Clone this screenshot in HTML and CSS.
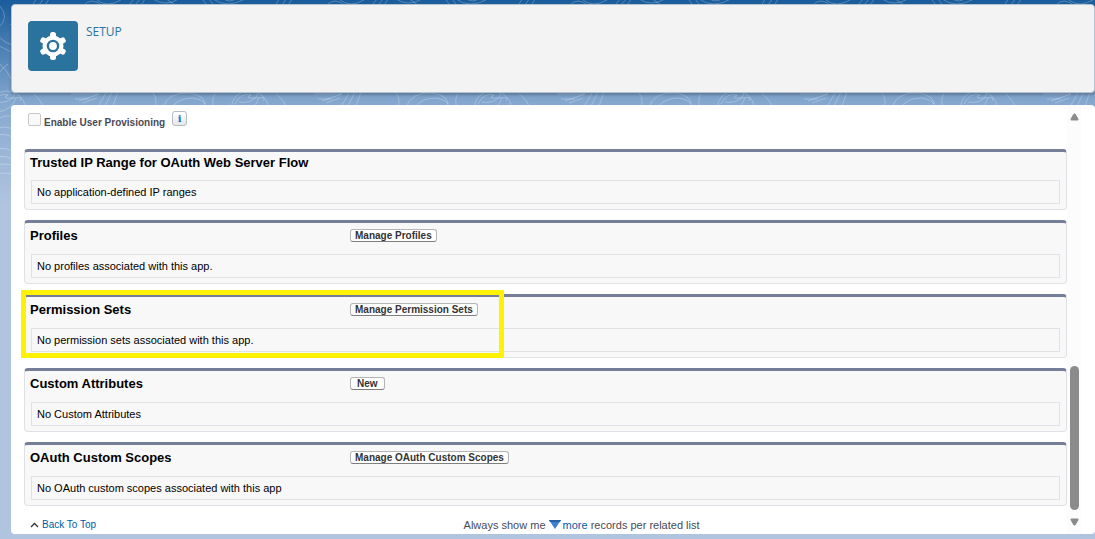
FILE: index.html
```html
<!DOCTYPE html>
<html lang="en">
<head>
<meta charset="utf-8">
<title>Setup</title>
<link rel="stylesheet" href="styles.css">
</head>
<body>
<svg class="contours" aria-hidden="true">
  <defs>
    <pattern id="topo" width="243" height="210" patternUnits="userSpaceOnUse" x="33" y="0">
      <g fill="none" stroke="#fff" stroke-opacity=".25">
        <path d="M0 4L4-2M6 5l5-7M12 5l5-7M50 6q8-10 20 0M64 0q10 8 24 0M96 5l6-7M102 5l6-7M108 5l5-7M120-1q12 8 26 0M132-2l10 7M180-1q14 10 32 0M190-2q6 6 14 0M170 0l4 5M176-1l4 5"/>
        <path d="M-4 91q10 6 14 15M38 94h28l-20 7M42 99h14M50 103l14-5M66 105l7-12M72 106l7-14M80 106l5-14M116 90q10 6 6 18M130 108q4-16 26-15q18 2 16 15M140 106q6-8 20-8q10 2 12 6M198 108q2-16 18-17q16 0 20 17M202 104q6-12 16-9q-8 4 6 3q10-2 6 3M182 94q-4 5-1 14"/>
        <path d="M210 6q10 12-2 22M210 38q14 12 22 4t-12-18M209 46q10 6 22 8M218 64q-12 8-12 22M210 64q18 18 14 32q-6 8-18 6M208 112q14-2 18-14M206 122q8-10 18-4M206 130q8-6 18 0M206 136q8-4 18 2M206 150q8-4 18 2M206 158q8-4 18 2M206 166q8-4 18 0M206 174q8-2 18 0"/>
      </g>
    </pattern>
  </defs>
  <rect width="100%" height="100%" fill="url(#topo)"/>
</svg>
<div class="page">
  <header class="setup-header">
    <span class="setup-icon">
      <svg viewBox="0 0 30 30" width="30" height="30" aria-hidden="true">
        <g fill="#fff">
          <circle cx="15" cy="15" r="10.500"/>
          <rect x="12" y="1" width="6" height="28" rx="2.500"/>
          <rect x="12" y="1" width="6" height="28" rx="2.500" transform="rotate(60 15 15)"/>
          <rect x="12" y="1" width="6" height="28" rx="2.500" transform="rotate(120 15 15)"/>
        </g>
        <circle cx="15" cy="15" r="5.100" fill="#fff" stroke="#2a739e" stroke-width="2.400"/>
      </svg>
    </span>
    <span class="setup-label">SETUP</span>
  </header>
  <main class="panel">
    <div class="content">
      <div class="provisioning">
        <input type="checkbox" id="provision" class="tick">
        <label for="provision">Enable User Provisioning</label>
        <button type="button" class="info" aria-label="Info">i</button>
      </div>
      <section class="block compact">
        <div class="block-head"><h2>Trusted IP Range for OAuth Web Server Flow</h2></div>
        <p class="empty">No application-defined IP ranges</p>
      </section>
      <section class="block">
        <div class="block-head"><h2>Profiles</h2><button type="button" class="btn">Manage Profiles</button></div>
        <p class="empty">No profiles associated with this app.</p>
      </section>
      <section class="block">
        <div class="block-head"><h2>Permission Sets</h2><button type="button" class="btn">Manage Permission Sets</button></div>
        <p class="empty">No permission sets associated with this app.</p>
        <div class="highlight"></div>
      </section>
      <section class="block">
        <div class="block-head"><h2>Custom Attributes</h2><button type="button" class="btn new">New</button></div>
        <p class="empty">No Custom Attributes</p>
      </section>
      <section class="block">
        <div class="block-head"><h2>OAuth Custom Scopes</h2><button type="button" class="btn">Manage OAuth Custom Scopes</button></div>
        <p class="empty">No OAuth custom scopes associated with this app</p>
      </section>
      <footer class="foot">
        <a href="#" class="top-link"><svg width="9" height="6" viewBox="0 0 9 6" aria-hidden="true"><path d="M1 5l3.500-3.500L8 5" fill="none" stroke="#333" stroke-width="1.300"/></svg>Back To Top</a>
        <span class="show-more">Always show me <a href="#"><svg width="12" height="9" viewBox="0 0 12 9" aria-hidden="true"><path d="M0 0h12L6 9z" fill="#3a7fd0"/><path d="M0 0h12l-1 2H1z" fill="#2762a8"/></svg><span class="more">more</span></a> records per related list</span>
      </footer>
    </div>
    <div class="scrollbar" aria-hidden="true">
      <svg width="9" height="8" viewBox="0 0 9 8"><path d="M4 1h1l3 5v1H1V6z" fill="#8b8b8b" stroke="#8b8b8b" stroke-linejoin="round"/></svg>
      <div class="thumb"></div>
      <svg width="9" height="8" viewBox="0 0 9 8"><path d="M4 7h1l3-5V1H1v1z" fill="#8b8b8b" stroke="#8b8b8b" stroke-linejoin="round"/></svg>
    </div>
  </main>
</div>
</body>
</html>
```
FILE: styles.css
```css
* { box-sizing: border-box; }

body {
  margin: 0;
  min-height: 100vh;
  background: linear-gradient(#195c9c 0, #87a9d0 105px, #b0c4df 205px, #b0c4df 100%);
  font-family: "Liberation Sans", Arial, sans-serif;
  font-size: 11px;
  color: #000;
}

h2, p { margin: 0; }
a { color: #015ba7; text-decoration: none; }

.contours {
  position: absolute;
  top: 0;
  left: 0;
  width: 100%;
  height: 205px;
}

.page {
  position: relative;
  display: flex;
  flex-direction: column;
  gap: 12px;
  min-height: 100vh;
  padding: 4px 0 5px 11px;
}

.setup-header {
  display: flex;
  gap: 8px;
  min-height: 89px;
  padding: 16px;
  background: #f3f3f3;
  border: 1px solid #b5c3d2;
  border-radius: 4px;
  box-shadow: 0 2px 3px rgba(0, 0, 0, .25);
}

.setup-icon {
  display: grid;
  place-items: center;
  width: 50px;
  height: 50px;
  background: #2a739e;
  border-radius: 4px;
}

.setup-label {
  font-family: "Open Sans", "Noto Sans", sans-serif;
  font-size: 12px;
  line-height: 22px;
  color: #2a739e;
}

.panel {
  display: flex;
  flex: 1;
  padding-right: 14px;
  background: #fff;
  border-radius: 4px;
}

.content {
  flex: 1;
  display: flex;
  flex-direction: column;
  gap: 10px;
  padding: 6px 0 0 13px;
}

.provisioning {
  display: flex;
  align-items: flex-start;
  gap: 3px;
  height: 28px;
  padding-left: 4px;
  font-size: 10px;
  font-weight: bold;
  color: #4a4a56;
}

.provisioning label { line-height: 13px; padding: 5px 4px 0 0; }

.tick {
  appearance: none;
  width: 13px;
  height: 13px;
  margin: 2px 0 0;
  background: #f9f9f9;
  border: 1px solid #c8c8c8;
  border-radius: 2px;
}

.info {
  width: 15px;
  height: 15px;
  padding: 0;
  background: linear-gradient(#fff, #e4e7ec);
  border: 1px solid #b6bac2;
  border-radius: 3px;
  font: bold 10px/13px "DejaVu Serif", serif;
  color: #1f6fc0;
}

.block {
  position: relative;
  padding: 0 6px 5px 5px;
  background: #f8f8f8;
  border: 1px solid #dfe1e6;
  border-top: 3px solid #747e96;
  border-radius: 4px;
}

.block-head {
  display: grid;
  grid-template-columns: 320px 1fr;
  align-items: center;
  justify-items: start;
  height: 25px;
  margin-bottom: 6px;
}

.compact .block-head { grid-template-columns: 1fr; height: 22px; }

h2 { font-size: 13px; line-height: 16px; }

.btn {
  height: 13px;
  padding: 0 4px;
  background: #fff;
  border: 1px solid #b5b5b5;
  border-bottom-color: #7f7f7f;
  border-radius: 3px;
  font: bold 10px/11px "Liberation Sans", Arial, sans-serif;
  color: #333;
}

.new { padding: 0 6px; }

.empty {
  margin-left: 1px;
  padding: 4px 5px;
  border: 1px solid #e0e3e5;
  line-height: 14px;
}

.highlight {
  position: absolute;
  top: -7px;
  left: -4px;
  width: 483px;
  height: 68px;
  border: 5px solid #fff200;
}

.foot {
  display: grid;
  grid-template-columns: auto 1fr;
  align-items: center;
  justify-items: center;
  padding: 2px 0 0 6px;
  line-height: 14px;
  color: #4a4a56;
}

.top-link { display: flex; align-items: center; gap: 3px; font-size: 10px; }
.more { padding-left: 2px; }

.scrollbar {
  display: flex;
  flex-direction: column;
  align-items: center;
  gap: 8px;
  width: 14px;
  padding: 8px 0;
  background: #fcfcfc;
}

.thumb {
  width: 9px;
  height: 144px;
  margin-top: auto;
  background: #8b8b8b;
  border-radius: 5px;
}
```
